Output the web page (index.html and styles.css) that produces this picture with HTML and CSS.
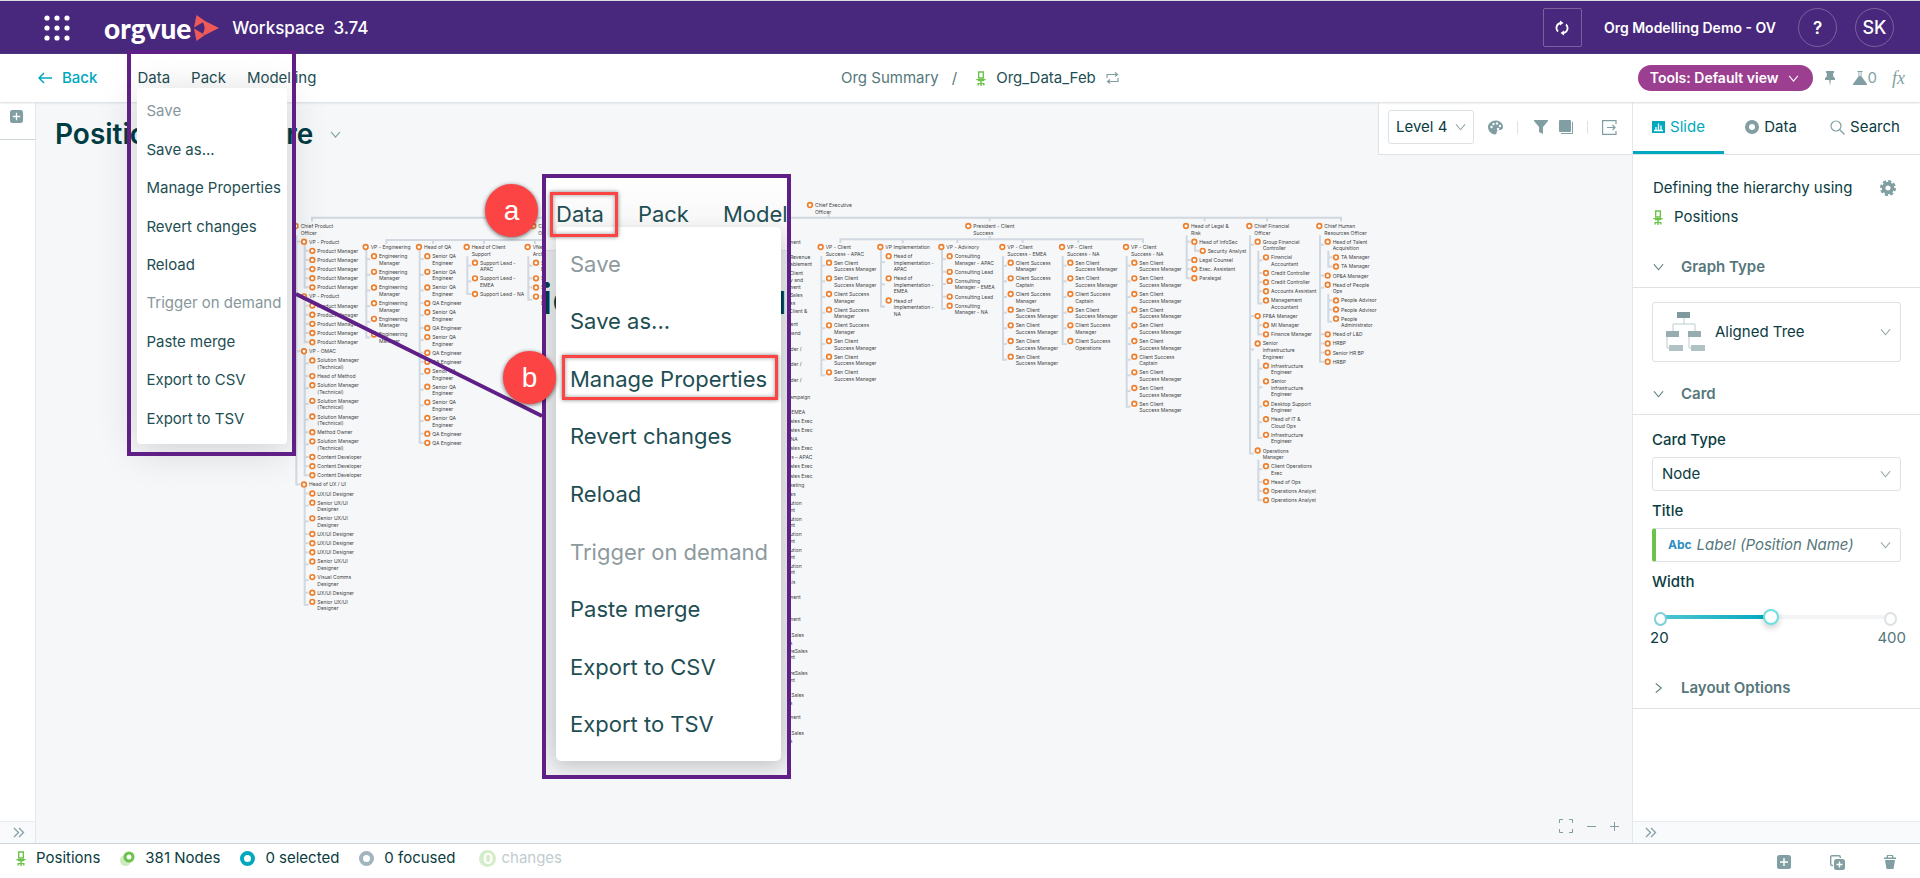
FILE: index.html
```html
<!DOCTYPE html>
<html lang="en">
<head>
  <meta charset="UTF-8">
  <title>Orgvue Workspace</title>
  <link rel="stylesheet" href="styles.css">
</head>
<body>
  <!-- Shared icons -->
  <svg class="sprite" aria-hidden="true">
    <symbol id="chevron" viewBox="0 0 12 8"><path d="M1 1l5 6 5-6" fill="none" stroke="currentColor" stroke-width="1.2"/></symbol>
    <symbol id="chair" viewBox="0 0 10 16"><path d="M2.500 1h5v6.500h-5zM0 9.200h10M5 9v6M2 15.500v-2h6v2M5 13v3" fill="none" stroke="currentColor" stroke-width="1.500"/><path d="M1 8.500h8l-1 2.500H2z" fill="currentColor"/></symbol>
    <symbol id="plus-box" viewBox="0 0 14 14"><rect width="14" height="14" rx="2.500" fill="currentColor"/><path d="M7 3v8M3 7h8" stroke="#fff" stroke-width="1.400"/></symbol>
    <symbol id="double-chevron" viewBox="0 0 12 11"><path d="M1 1l4.500 4.500L1 10M6 1l4.500 4.500L6 10" fill="none" stroke="currentColor" stroke-width="1.300"/></symbol>
  </svg>

  <header class="topbar">
    <button class="apps" aria-label="Apps">
      <svg width="26" height="26" viewBox="0 0 26 26" fill="#fff"><circle cx="3" cy="3" r="2.600"/><circle cx="13" cy="3" r="2.600"/><circle cx="23" cy="3" r="2.600"/><circle cx="3" cy="13" r="2.600"/><circle cx="13" cy="13" r="2.600"/><circle cx="23" cy="13" r="2.600"/><circle cx="3" cy="23" r="2.600"/><circle cx="13" cy="23" r="2.600"/><circle cx="23" cy="23" r="2.600"/></svg>
    </button>
    <a class="logo" href="#">orgvue
      <svg width="26" height="26" viewBox="0 0 26 26" fill="#ee5a5a"><path d="M3.500 0L12 6 1 12.500zM3.500 26L12 20 1 13.500zM9.500 7l2.500-1 14 7-14 7-2.500-1c2.800-4 2.800-8 0-12z"/></svg>
    </a>
    <span class="product">Workspace&nbsp; 3.74</span>
    <div class="account">
      <button class="refresh" aria-label="Refresh">
        <svg width="14" height="16" viewBox="0 0 14 16" fill="none" stroke="#fff" stroke-width="1.800"><path d="M8.500 13A5 5 0 0 0 11 4.500M5.500 3A5 5 0 0 0 3 11.500"/><path d="M5 .500v5L8.500 3zM9 10.500v5L5.500 13z" fill="#fff" stroke="none"/></svg>
      </button>
      <span class="tenant">Org Modelling Demo - OV</span>
      <button class="round">?</button>
      <button class="round initials">SK</button>
    </div>
  </header>

  <nav class="menubar">
    <a class="back" href="#"><svg width="14" height="12" viewBox="0 0 14 12" fill="none" stroke="currentColor" stroke-width="1.500"><path d="M14 6H1M6 1L1 6l5 5"/></svg>Back</a>
    <div class="menus">
      <div class="menu-holder">
        <button class="menu-button">Data</button>
        <ul class="dropdown">
          <li><button disabled>Save</button></li>
          <li><button>Save as...</button></li>
          <li><button>Manage Properties</button></li>
          <li><button>Revert changes</button></li>
          <li><button>Reload</button></li>
          <li><button disabled>Trigger on demand</button></li>
          <li><button>Paste merge</button></li>
          <li><button>Export to CSV</button></li>
          <li><button>Export to TSV</button></li>
        </ul>
      </div>
      <button class="menu-button">Pack</button>
      <button class="menu-button">Modelling</button>
    </div>
    <div class="breadcrumb">
      <a href="#">Org Summary</a><span>/</span>
      <svg class="green" width="10" height="15"><use href="#chair"/></svg>
      <strong>Org_Data_Feb</strong>
      <svg width="13" height="12" viewBox="0 0 13 12" fill="none" stroke="#819fa2" stroke-width="1.200"><path d="M1 6V2.500h10M9 .500l2.500 2L9 4.500M12 6v3.500H2M4 7.500L1.500 9.500 4 11.500"/></svg>
    </div>
    <div class="tools">
      <button class="view-pill">Tools: Default view <svg width="11" height="7"><use href="#chevron"/></svg></button>
      <svg width="10" height="15" viewBox="0 0 10 15" fill="#819fa2"><path d="M1 0h8v2H8l.500 4L10 7v2H5.800L5 15l-.800-6H0V7l1.500-1L2 2H1z"/></svg>
      <button class="flask"><svg width="14" height="14" viewBox="0 0 14 14" fill="#819fa2"><path d="M4.500 0h5v1h-1v4.500L14 13v1H0v-1l5.500-7.500V1h-1z"/><path d="M6.300 1h1.400v4H6.300z" fill="#fff"/></svg>0</button>
      <button class="fx">fx</button>
    </div>
  </nav>

  <main class="workspace">
    <aside class="rail">
      <button class="rail-add" aria-label="Add slide"><svg width="13" height="13"><use href="#plus-box"/></svg></button>
      <button class="rail-expand" aria-label="Expand"><svg width="12" height="11"><use href="#double-chevron"/></svg></button>
    </aside>

    <section class="canvas">
      <svg class="chart" id="chart" viewBox="0 0 4800 2220"></svg>
      <div class="canvas-head">
        <h1>Positions Structure</h1>
        <button aria-label="Slide list"><svg width="11" height="7"><use href="#chevron"/></svg></button>
        <div class="chart-tools">
          <label class="select level"><select aria-label="Level"><option>Level 4</option></select><svg width="11" height="8"><use href="#chevron"/></svg></label>
          <svg width="15" height="15" viewBox="0 0 15 15"><path d="M7.500.500C3.500.500 0 3.500 0 7s3 7.500 7 7.500c2.500 0 1-3 2.500-4s5.500.500 5.500-3.500-3.500-6.500-7.500-6.500z" fill="#819fa2"/><g fill="#fff"><circle cx="3.500" cy="7" r="1.200"/><circle cx="5.500" cy="4" r="1.200"/><circle cx="9" cy="3.500" r="1.200"/><circle cx="12" cy="6" r="1.200"/><circle cx="10" cy="9" r="1.200"/></g></svg>
          <i class="divider"></i>
          <svg class="funnel" width="14" height="14" viewBox="0 0 14 14" fill="#819fa2"><path d="M0 0h14v1L9 7v7l-4-2V7L0 1z"/></svg>
          <svg width="14" height="14" viewBox="0 0 14 14"><rect width="12" height="12" rx="1" fill="#819fa2"/><path d="M13.500 2v11.500H2" fill="none" stroke="#819fa2"/></svg>
          <i class="divider"></i>
          <svg width="15" height="15" viewBox="0 0 15 15" fill="none" stroke="#819fa2" stroke-width="1.200"><path d="M14 4V.600H.600v13.800H14V11M5 7.500h8M10.500 5L13 7.500 10.500 10"/></svg>
        </div>
      </div>
      <div class="zoom-tools">
        <button aria-label="Fit"><svg width="14" height="14" viewBox="0 0 14 14"><path d="M.500 4V.500H4M10 .500h3.500V4M13.500 10v3.500H10M4 13.500H.500V10" fill="none" stroke="currentColor"/></svg></button>
        <button aria-label="Zoom out"><svg width="9" height="9" viewBox="0 0 9 9"><path d="M0 4.500h9" stroke="currentColor"/></svg></button>
        <button aria-label="Zoom in"><svg width="9" height="9" viewBox="0 0 9 9"><path d="M0 4.500h9M4.500 0v9" stroke="currentColor"/></svg></button>
      </div>
    </section>

    <aside class="panel">
      <div class="tabs">
        <button class="tab active"><svg width="13" height="12" viewBox="0 0 13 12"><path d="M0 0h13v12H0z" fill="#00a9bd"/><path d="M2 9.500h9M4 9V6M6.500 9V2.500M9 9V4.500" stroke="#fff" stroke-width="1.300"/></svg>Slide</button>
        <button class="tab"><svg width="14" height="14" viewBox="0 0 14 14"><circle cx="7" cy="7" r="5" fill="none" stroke="#819fa2" stroke-width="4"/></svg>Data</button>
        <button class="tab"><svg width="15" height="15" viewBox="0 0 15 15" fill="none" stroke="#819fa2" stroke-width="1.200"><circle cx="6" cy="6" r="5"/><path d="M9.500 9.500l5 5"/></svg>Search</button>
      </div>
      <div class="hierarchy">
        <div class="hierarchy-row">Defining the hierarchy using
          <button aria-label="Settings"><svg width="16" height="16" viewBox="-8 -8 16 16"><circle r="4.400" fill="none" stroke="#819fa2" stroke-width="3.600"/><circle r="6.600" fill="none" stroke="#819fa2" stroke-width="2.800" stroke-dasharray="3 2.180"/></svg></button>
        </div>
        <div class="positions"><svg class="green" width="10" height="15"><use href="#chair"/></svg>Positions</div>
      </div>
      <button class="section"><svg width="11" height="8"><use href="#chevron"/></svg>Graph Type</button>
      <div class="section-body">
        <label class="select graph">
          <svg class="tree-icon" width="40" height="40" viewBox="0 0 40 40"><path d="M18 6v6M7 20v-8h22v8M1 24v12h4M23 24v12h4" fill="none" stroke="#bccdce"/><path d="M11 0h13v6H11z" fill="#7f9a9d"/><path d="M0 19h13v6H0zM22 19h13v6H22z" fill="#97aeb0"/><path d="M3 33h14v6H3zM25 33h14v6H25z" fill="#b0c2c4"/></svg>
          <select aria-label="Graph type"><option>Aligned Tree</option></select><svg width="11" height="8"><use href="#chevron"/></svg>
        </label>
      </div>
      <button class="section"><svg width="11" height="8"><use href="#chevron"/></svg>Card</button>
      <div class="section-body card-body">
        <label class="field-label" for="card-type">Card Type</label>
        <div class="select"><select id="card-type"><option>Node</option></select><svg width="11" height="8"><use href="#chevron"/></svg></div>
        <label class="field-label" for="card-title">Title</label>
        <div class="select title-select"><span class="abc">Abc</span><select id="card-title"><option>Label (Position Name)</option></select><svg width="11" height="8"><use href="#chevron"/></svg></div>
        <label class="field-label" for="card-width">Width</label>
        <div class="slider"><input type="range" id="card-width" min="20" max="400" value="200"></div>
        <div class="range-ends"><span>20</span><span>400</span></div>
      </div>
      <button class="section layout"><svg class="closed" width="11" height="8"><use href="#chevron"/></svg>Layout Options</button>
      <button class="panel-collapse" aria-label="Collapse"><svg width="12" height="11"><use href="#double-chevron"/></svg></button>
    </aside>
  </main>

  <footer class="statusbar">
    <span class="status"><svg class="green" width="10" height="15"><use href="#chair"/></svg>Positions</span>
    <span class="status"><svg width="15" height="15" viewBox="0 0 15 15"><circle cx="5.500" cy="9.500" r="5.500" fill="#cdebc0"/><circle cx="9" cy="6" r="4" fill="#fff" stroke="#6cc24a" stroke-width="3"/></svg>381 Nodes</span>
    <span class="status"><svg width="15" height="15" viewBox="0 0 15 15"><circle cx="7.500" cy="7.500" r="5.500" fill="none" stroke="#00a9bd" stroke-width="4"/></svg>0 selected</span>
    <span class="status"><svg width="15" height="15" viewBox="0 0 15 15"><circle cx="7.500" cy="7.500" r="5.500" fill="none" stroke="#a2b4bd" stroke-width="4"/></svg>0 focused</span>
    <span class="status changes"><b>0</b>changes</span>
    <div class="actions">
      <button aria-label="Add"><svg width="14" height="14"><use href="#plus-box"/></svg></button>
      <button aria-label="Duplicate"><svg width="15" height="15" viewBox="0 0 15 15"><path d="M3 10.500H2a1.300 1.300 0 0 1-1.300-1.300V2A1.300 1.300 0 0 1 2 .700h7A1.300 1.300 0 0 1 10.300 2v1" fill="none" stroke="currentColor" stroke-width="1.400"/><rect x="4" y="4" width="11" height="11" rx="2.500" fill="currentColor"/><path d="M9.500 6.500v6M6.500 9.500h6" stroke="#fff" stroke-width="1.300"/></svg></button>
      <button aria-label="Delete"><svg width="12" height="14" viewBox="0 0 12 14" fill="currentColor"><path d="M0 2.500h2.500L3 0h6l.500 2.500H12V4H0zM1 5h10l-1.500 9h-7z"/><path d="M4 1h4v1.500H4z" fill="#fff"/></svg></button>
    </div>
  </footer>

  <!-- Walkthrough callouts -->
  <div class="outline"></div>
  <svg class="pointer" width="250" height="130" viewBox="0 0 250 130"><path d="M2 3l246 122" stroke="#601f86" stroke-width="4"/></svg>
  <div class="magnifier">
    <div class="mag-bar"><span>Data</span><span>Pack</span><span>Modelling</span></div>
    <div class="mag-title">Positions Structure</div>
    <ul class="mag-menu">
      <li class="off">Save</li>
      <li>Save as...</li>
      <li>Manage Properties</li>
      <li>Revert changes</li>
      <li>Reload</li>
      <li class="off">Trigger on demand</li>
      <li>Paste merge</li>
      <li>Export to CSV</li>
      <li>Export to TSV</li>
    </ul>
  </div>
  <div class="highlight highlight-data"></div>
  <div class="highlight highlight-manage"></div>
  <div class="badge badge-a">a</div>
  <div class="badge badge-b">b</div>

  <script src="chart.js"></script>
</body>
</html>
```
FILE: styles.css
```css
* { box-sizing: border-box; }
body {
  margin: 0;
  height: 100vh;
  display: flex;
  flex-direction: column;
  overflow: hidden;
  position: relative;
  font-family: Inter, sans-serif;
  font-size: 15px;
  line-height: 20px;
  color: #0b3c41;
  background: #fff;
}
button {
  font: inherit;
  color: inherit;
  background: none;
  border: none;
  padding: 0;
  display: inline-flex;
  align-items: center;
}
svg { display: block; flex: none; }
a { color: inherit; text-decoration: none; }
ul { list-style: none; margin: 0; padding: 0; }
.sprite { position: absolute; width: 0; height: 0; }
.green { color: #6cc24a; }

/* Top bar */
.topbar {
  height: 54px;
  flex: none;
  display: flex;
  align-items: center;
  padding: 0 26px 0 44px;
  background: #48287c;
  border-top: 1px solid #dcdce4;
  color: #fff;
}
.logo {
  display: flex;
  align-items: center;
  gap: 2px;
  margin-left: 34px;
  font-family: Lato, sans-serif;
  font-weight: 900;
  font-size: 28px;
  line-height: 32px;
}
.product {
  margin-left: 13px;
  font-size: 17px;
  font-weight: 500;
}
.account {
  margin-left: auto;
  display: flex;
  align-items: center;
}
.tenant {
  margin: 0 22px;
  font-size: 14px;
  font-weight: 600;
}
.refresh, .round {
  width: 39px;
  height: 39px;
  justify-content: center;
  border: 1px solid #7a609f;
  border-radius: 2px;
}
.round {
  border-radius: 50%;
  font-size: 17px;
  font-weight: 600;
}
.initials {
  margin-left: 18px;
  font-weight: 500;
  font-size: 18px;
}

/* Menu bar */
.menubar {
  position: relative;
  z-index: 2;
  height: 48px;
  flex: none;
  display: flex;
  align-items: center;
  justify-content: space-between;
  padding: 0 15px 0 38px;
  background: #fff;
  box-shadow: 0 1px 2px #d5dade;
}
.back {
  display: flex;
  align-items: center;
  gap: 10px;
  color: #00a9bd;
  font-weight: 500;
}
.menus {
  display: flex;
  gap: 21px;
  margin: 0 auto 0 40px;
  color: #1e4e53;
}
.menu-holder { position: relative; }
.dropdown {
  position: absolute;
  left: 0;
  top: 20px;
  width: 150px;
  height: 356px;
  padding: 4px 0 6px;
  display: grid;
  grid-auto-rows: 1fr;
  background: #fff;
  border-radius: 4px;
  box-shadow: 0 6px 40px rgba(0, 0, 0, 0.16);
}
.dropdown button {
  width: 100%;
  height: 100%;
  padding-left: 9px;
  white-space: nowrap;
}
.dropdown button:disabled { color: #87979b; }
.breadcrumb {
  position: absolute;
  left: 50%;
  margin-left: -119px;
  display: flex;
  align-items: center;
  gap: 10px;
  color: #56777b;
}
.breadcrumb span { margin: 0 9px 0 3px; }
.breadcrumb strong { font-weight: 400; color: #1e4e53; }
.tools {
  display: flex;
  align-items: center;
  gap: 15px;
  color: #819fa2;
}
.view-pill {
  height: 26px;
  margin-right: -3px;
  padding: 0 14px 0 12px;
  gap: 9px;
  border-radius: 13px;
  background: #9c3f91;
  color: #fff;
  font-weight: 600;
  font-size: 14px;
}
.flask { gap: 1px; margin-left: 3px; }
.fx {
  font-family: "Liberation Serif", serif;
  font-style: italic;
  font-size: 18px;
}

/* Workspace */
.workspace {
  flex: 1;
  min-height: 0;
  display: flex;
}
.rail {
  width: 36px;
  display: flex;
  flex-direction: column;
  justify-content: space-between;
  border-right: 1px solid #e4e8eb;
  color: #819fa2;
}
.rail-add {
  height: 38px;
  padding: 0 0 8px 10px;
  border-bottom: 1px solid #d0d8dc;
}
.rail-expand {
  height: 22px;
  padding-left: 13px;
  background: #f9fafc;
  border-top: 1px solid #e8ecef;
}
.canvas {
  flex: 1;
  min-width: 0;
  position: relative;
  overflow: hidden;
  background: #f5f7f9;
}
.chart {
  position: absolute;
  left: -1px;
  top: 1px;
  width: 1600px;
  height: 740px;
}
.chart text {
  font-size: 15px;
  fill: #444;
}
.chart .link { fill: none; stroke: #d1d8e0; stroke-width: 6px; }
.chart .dot { fill: #fff; stroke: #ee7f2d; stroke-width: 5px; }
.canvas-head {
  position: relative;
  display: flex;
  align-items: flex-start;
  padding-left: 19px;
  color: #819fa2;
}
.canvas-head h1 {
  margin: 15px 17px 0 0;
  font-size: 28px;
  line-height: 34px;
  font-weight: 600;
  color: #003c42;
}
.canvas-head > button { height: 65px; }
.chart-tools {
  margin-left: auto;
  height: 53px;
  padding: 0 15px 2px 9px;
  display: flex;
  align-items: center;
  gap: 14px;
  background: #fff;
  border: solid #dde2e7;
  border-width: 0 0 1px 1px;
}
.divider { width: 1px; height: 13px; background: #dde2e7; }
.funnel { margin: 0 -3px 0 2px; }
.zoom-tools {
  position: absolute;
  right: 13px;
  bottom: 10px;
  display: flex;
  gap: 14px;
  color: #819fa2;
}

/* Selects */
.select {
  display: flex;
  align-items: center;
  height: 34px;
  padding: 0 9px;
  background: #fff;
  border: 1px solid #dde2e7;
  border-radius: 3px;
  color: #92a2a6;
}
.select select {
  appearance: none;
  flex: 1;
  min-width: 0;
  border: none;
  padding: 0;
  background: none;
  font: inherit;
  color: #0b3c41;
}
.level { width: 86px; padding: 0 7px; }

/* Right panel */
.panel {
  width: 288px;
  display: flex;
  flex-direction: column;
  border-left: 1px solid #e4e8eb;
  background: #fff;
}
.tabs {
  height: 53px;
  display: grid;
  grid-template-columns: 91px 1fr 1fr;
  padding-right: 8px;
  border-bottom: 1px solid #dde2e7;
}
.tab {
  justify-content: center;
  gap: 5px;
  padding-top: 1px;
  border-bottom: 3px solid transparent;
}
.tab.active { color: #00a9bd; border-color: #00a9bd; }
.hierarchy { padding: 23px 24px 19px 20px; }
.hierarchy-row { display: flex; justify-content: space-between; align-items: center; white-space: nowrap; }
.positions { display: flex; align-items: center; gap: 11px; margin-top: 9px; }
.section {
  height: 42px;
  flex: none;
  padding-left: 20px;
  gap: 17px;
  border-bottom: 1px solid #dde2e7;
  font-weight: 600;
  color: #56777b;
}
.section-body { padding: 14px 19px 11px; }
.graph { height: 60px; padding-left: 13px; }
.tree-icon { margin-right: 9px; }
.card-body { padding-top: 15px; display: flex; flex-direction: column; }
.field-label { font-weight: 500; margin-bottom: 7px; }
.card-body .select { margin-bottom: 10px; }
.card-body .title-select {
  border-left: 4px solid #6cc24a;
  padding-left: 12px;
  font-style: italic;
}
.title-select select { color: #56777b; }
.abc {
  margin-right: 5px;
  font-size: 12px;
  font-weight: 700;
  font-style: normal;
  color: #2e8fc0;
}
.slider {
  position: relative;
  height: 20px;
  margin: 8px 4px 1px;
}
.slider::before, .slider::after {
  content: "";
  position: absolute;
  z-index: 1;
  top: 5px;
  width: 9px;
  height: 10px;
  border: 2px solid #7dd0da;
  border-radius: 50%;
  background: #fff;
}
.slider::before { left: -2px; }
.slider::after { right: 0; border-color: #dde2e7; }
.slider input {
  display: block;
  appearance: none;
  width: 100%;
  height: 20px;
  margin: 0;
  background: none;
}
.slider input::-webkit-slider-runnable-track {
  height: 4px;
  background: linear-gradient(to right, #55c6d2, #00a9bd 47%, #f2f4f6 47%);
}
.slider input::-webkit-slider-thumb {
  appearance: none;
  width: 16px;
  height: 16px;
  margin-top: -6px;
  border: 2px solid #6fe0e2;
  border-radius: 50%;
  background: #fff;
  box-shadow: 0 3px 6px rgba(0, 0, 0, 0.2);
}
.range-ends { display: flex; justify-content: space-between; margin: 0 -5px 0 -2px; }
.range-ends span:last-child { color: #56777b; }
.layout { margin-top: 8px; }
.closed { transform: rotate(-90deg); }
.panel-collapse {
  margin-top: auto;
  height: 22px;
  padding-left: 12px;
  background: #f9fafc;
  border-top: 1px solid #e8ecef;
  color: #819fa2;
}

/* Status bar */
.statusbar {
  height: 35px;
  flex: none;
  display: flex;
  gap: 20px;
  padding: 4px 24px 0 16px;
  border-top: 1px solid #ccd5d9;
}
.status { display: flex; align-items: center; gap: 10px; height: 20px; }
.changes { margin-left: 4px; color: #c0cccf; gap: 5px; }
.changes b {
  width: 17px;
  height: 17px;
  line-height: 17px;
  border-radius: 50%;
  background: #d3edc6;
  color: #fff;
  text-align: center;
}
.actions { margin-left: auto; display: flex; gap: 39px; height: 28px; color: #819fa2; }

/* Callouts, drawn over everything */
.outline, .magnifier, .pointer, .highlight, .badge { position: absolute; z-index: 5; }
.outline {
  left: 127px;
  top: 50px;
  width: 169px;
  height: 406px;
  border: 4px solid #601f86;
}
.pointer { left: 294px; top: 291px; }
.magnifier {
  left: 542px;
  top: 174px;
  width: 249px;
  height: 605px;
  border: 4px solid #601f86;
  overflow: hidden;
  background: linear-gradient(#e4e6e8, #e4e6e8 92%, #eff1f2);
  font-size: 22px;
  color: #1e4e53;
}
.mag-bar {
  height: 73px;
  padding: 26px 0 0 10px;
  display: flex;
  gap: 34px;
  background: linear-gradient(#fff, #f3f3f3);
  border-bottom: 1px solid #d8dadc;
}
.mag-title {
  margin: 23px 0 0 -106px;
  font-size: 42px;
  line-height: 50px;
  font-weight: 600;
  white-space: nowrap;
  color: #003c42;
}
.mag-menu {
  position: absolute;
  left: 10px;
  top: 49px;
  width: 225px;
  height: 534px;
  padding: 8px 0 8px 14px;
  display: grid;
  grid-auto-rows: 1fr;
  align-items: center;
  background: #fff;
  border-radius: 5px;
  box-shadow: 0 6px 18px rgba(0, 0, 0, 0.16);
  white-space: nowrap;
}
.off { color: #8d9a9e; }
.highlight {
  border: 3px solid #fc4444;
  box-shadow: 0 0 4px rgba(0, 0, 0, 0.5), inset 0 0 4px rgba(0, 0, 0, 0.4);
}
.highlight-data { left: 550px; top: 192px; width: 68px; height: 45px; }
.highlight-manage { left: 562px; top: 355px; width: 216px; height: 45px; }
.badge {
  width: 53px;
  height: 53px;
  border-radius: 50%;
  background: #fc4444;
  box-shadow: 0 1px 4px rgba(0, 0, 0, 0.6);
  color: #fff;
  font-family: "Liberation Sans", sans-serif;
  font-size: 28px;
  line-height: 54px;
  text-align: center;
}
.badge-a { left: 485px; top: 184px; }
.badge-b { left: 503px; top: 351px; }
```
FILE: chart.js
```js
const chart = document.getElementById("chart");
const LINE = 19.6;
const GAP = 7.8;
const INDENT = 25;

function add(tag, attrs, text) {
  const el = document.createElementNS("http://www.w3.org/2000/svg", tag);
  for (const key in attrs) el.setAttribute(key, attrs[key]);
  if (text) el.textContent = text;
  chart.appendChild(el);
}

function link(d) {
  add("path", { class: "link", d: d });
}

// "a|b" is a label on two lines; an array is [label, children]
function drawNode(node, x, y) {
  const label = Array.isArray(node) ? node[0] : node;
  const children = Array.isArray(node) ? node[1] : [];
  const lines = label.split("|");
  let next = y + lines.length * LINE + GAP;
  let last = 0;
  children.forEach(child => {
    const name = Array.isArray(child) ? child[0] : child;
    last = next + (name.split("|").length - 1) * 9;
    link(`M${x + 2} ${last}h12`);
    next = drawNode(child, x + INDENT, next);
  });
  if (children.length) {
    link(`M${x + 2} ${y + (lines.length - 1) * LINE + 8}V${last + 3}`);
  }
  add("circle", { class: "dot", cx: x, cy: y, r: 7 });
  lines.forEach((line, i) => add("text", { x: x + 15, y: y + 6 + i * LINE }, line));
  return next;
}

const times = (n, item) => Array(n).fill(item);
const sen = "Sen Client|Success Manager";
const csm = "Client Success|Manager";
const captain = "Client Success|Captain";
const srQa = "Senior QA|Engineer";
const solution = "Solution Manager|(Technical)";
const infra = "Infrastructure|Engineer";
const srUx = "Senior UX/UI|Designer";

// Bars across the top levels
link("M831 355V344H3918V355M2381 333V344M2864 344V355M3509 344V355M3696 344V355");
link("M1054 422V411H2100M1194 411V422M1347 411V422M1500 411V422");
link("M2416 420V409H3324V420M2864 398V409M2603 409V420M2767 409V420M2963 409V420M3130 409V420");

const roots = [
  [2325, 306, "Chief Executive|Officer"],
  [782, 369, ["Chief Product|Officer", [
    ["VP - Product", times(5, "Product Manager")],
    ["VP - Product", times(5, "Product Manager")],
    ["VP - OMAC", [solution, "Head of Method", solution, solution, solution, "Method Owner", solution,
      ...times(3, "Content Developer")]],
    ["Head of UX / UI", ["UX/UI Designer", srUx, srUx, ...times(3, "UX/UI Designer"), srUx,
      "Visual Comms|Designer", "UX/UI Designer", srUx]]
  ]]],
  [992, 432, ["VP - Engineering", times(6, "Engineering|Manager")]],
  [1152, 432, ["Head of QA", [srQa, srQa, srQa, "QA Engineer", srQa, "QA Engineer", srQa,
    "QA Engineer", "QA Engineer", srQa, srQa, srQa, srQa, "QA Engineer", "QA Engineer"]]],
  [1295, 432, ["Head of Client|Support", ["Support Lead -|APAC", "Support Lead -|EMEA", "Support Lead - NA"]]],
  [1495, 369, "Chief|Officer"],
  [1478, 432, ["VNext|Architect", ["Senior|Engineer", "Senior", "Senior", "UI|Lead"]]],
  [2800, 369, "President -  Client|Success"],
  [2357, 432, ["VP - Client|Success - APAC", [sen, sen, csm, csm, csm, sen, sen, sen]]],
  [2536, 432, ["VP Implementation", ["Head of|Implementation -|APAC", "Head of|Implementation -|EMEA", "Head of|Implementation -|NA"]]],
  [2719, 432, ["VP - Advisory", ["Consulting|Manager - APAC", "Consulting Lead", "Consulting|Manager - EMEA",
    "Consulting Lead", "Consulting|Manager - NA"]]],
  [2902, 432, ["VP - Client|Success - EMEA", [csm, captain, csm, sen, sen, sen, sen]]],
  [3081, 432, ["VP - Client|Success - NA", [sen, sen, captain, sen, csm, "Client Success|Operations"]]],
  [3273, 432, ["VP - Client|Success - NA", [...times(6, sen), captain, sen, sen, sen]]],
  [3453, 369, ["Head of Legal &|Risk", [["Head of InfoSec", ["Security Analyst"]], "Legal Counsel", "Exec. Assistant", "Paralegal"]]],
  [3643, 369, ["Chief Financial|Officer", [
    ["Group Financial|Controller", ["Financial|Accountant", "Credit Controller", "Credit Controller",
      "Accounts Assistant", "Management|Accountant"]],
    ["FP&A Manager", ["MI Manager", "Finance Manager"]],
    ["Senior|Infrastructure|Engineer", [infra, "Senior|Infrastructure|Engineer", "Desktop Support|Engineer",
      "Head of IT &|Cloud Ops", infra]],
    ["Operations|Manager", ["Client Operations|Exec", "Head of Ops", "Operations Analyst", "Operations Analyst"]]
  ]]],
  [3853, 369, ["Chief Human|Resources Officer", [
    ["Head of Talent|Acquisition", ["TA Manager", "TA Manager"]],
    "OP&A Manager",
    ["Head of People|Ops", ["People Advisor", "People Advisor", "People|Administrator"]],
    "Head of L&D", "HRBP", "Senior HR BP", "HRBP"
  ]]]
];
roots.forEach(([x, y, node]) => drawNode(node, x, y));

// Sales and marketing branch, right-hand ends of the labels
const sales = [
  [2297, 418, "Management"], [2326, 463, "Revenue"], [2331, 484, "Enablement"], [2304, 511, "Client"],
  [2304, 532, "Strategy and"], [2297, 551, "Management"], [2303, 577, "Sales"], [2281, 599, "Business"],
  [2317, 624, "Client &"], [2289, 664, "Content"], [2297, 691, "Demand"], [2300, 739, "Leader /"],
  [2300, 784, "Leader /"], [2300, 832, "Leader /"], [2326, 881, "Campaign"], [2311, 928, "Sales EMEA"],
  [2333, 955, "Sales Exec"], [2333, 982, "Sales Exec"], [2288, 1009, "Sales NA"], [2333, 1036, "Sales Exec"],
  [2332, 1063, "Sales – APAC"], [2333, 1090, "Sales Exec"], [2333, 1120, "Sales Exec"],
  [2308, 1147, "Marketing"], [2282, 1174, "Sales"],
  [2300, 1201, "Solution"], [2280, 1222, "Consultant"], [2300, 1249, "Solution"], [2280, 1267, "Consultant"],
  [2300, 1294, "Solution"], [2280, 1314, "Consultant"], [2300, 1342, "Solution"], [2280, 1363, "Consultant"],
  [2300, 1390, "Solution"], [2280, 1408, "Consultant"], [2281, 1436, "Analysis"],
  [2297, 1483, "Management"], [2297, 1549, "Management"], [2307, 1597, "Sales"], [2272, 1619, "Operations"],
  [2318, 1645, "PreSales"], [2280, 1663, "Consultant"], [2318, 1711, "PreSales"], [2280, 1732, "Consultant"],
  [2307, 1777, "Sales"], [2272, 1799, "Operations"], [2297, 1843, "Management"], [2307, 1891, "Sales"],
  [2272, 1913, "Operations"]
];
sales.forEach(([x, y, text]) => add("text", { x: x, y: y + 6, "text-anchor": "end" }, text));
```
